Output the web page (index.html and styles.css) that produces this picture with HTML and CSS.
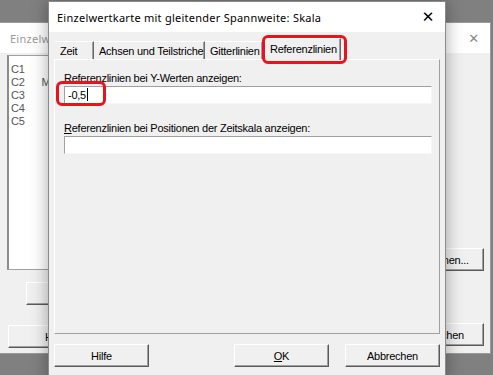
FILE: index.html
```html
<!DOCTYPE html>
<html lang="de">
<head>
    <meta charset="UTF-8">
    <title>Einzelwertkarte mit gleitender Spannweite: Skala</title>
    <link rel="stylesheet" href="styles.css">
</head>
<body>
    <div class="desktop">

        <!-- main dialog behind -->
        <div class="win back">
            <div class="titlebar">
                <span class="title">Einzelwertkarte mit gleitender Spannweite</span>
                <span class="close">&#x2715;</span>
            </div>
            <div class="back-body">
                <div class="listbox">
                    <div class="item">C1</div>
                    <div class="item">C2 <span class="col2">M</span></div>
                    <div class="item">C3</div>
                    <div class="item">C4</div>
                    <div class="item">C5</div>
                </div>
                <button class="btn b-select">Auswählen</button>
                <button class="btn b-help">Hilfe</button>
                <button class="btn b-opts">Daten<u>o</u>ptionen...</button>
                <button class="btn b-cancel">Abbrechen</button>
            </div>
        </div>

        <!-- scale sub-dialog in front -->
        <div class="win front">
            <div class="titlebar">
                <span class="title">Einzelwertkarte mit gleitender Spannweite: Skala</span>
                <span class="close">&#x2715;</span>
            </div>
            <div class="body">
                <div class="tabs">
                    <div class="tab tab-time">Zeit</div>
                    <div class="tab tab-axes">Achsen und Teilstriche</div>
                    <div class="tab tab-grid">Gitterlinien</div>
                    <div class="tab tab-ref active">Referenzlinien</div>
                </div>
                <div class="panel">
                    <div class="field">
                        <label>Referenzlinien bei Y-Werten anzeigen:</label>
                        <div class="input">-0,5<span class="caret"></span></div>
                    </div>
                    <div class="field">
                        <label><u>R</u>eferenzlinien bei Positionen der Zeitskala anzeigen:</label>
                        <div class="input"></div>
                    </div>
                </div>
                <div class="buttons">
                    <button class="btn">Hilfe</button>
                    <div class="right">
                        <button class="btn"><u>O</u>K</button>
                        <button class="btn">Abbrechen</button>
                    </div>
                </div>
            </div>

            <!-- red annotation marks -->
            <div class="mark mark-tab"></div>
            <div class="mark mark-input"></div>
        </div>
    </div>
</body>
</html>
```

FILE: styles.css
```css
*{
    margin: 0; padding: 0;
    box-sizing: border-box;
}
body{
    width: 493px;
    height: 375px;
    overflow: hidden;
    font-family: "Liberation Sans", Arial, sans-serif;
    font-size: 11px;
    letter-spacing: -0.25px;
    color: #000;
}
.desktop{
    position: relative;
    width: 493px;
    height: 375px;
    background: #808080;
    overflow: hidden;
}
.win{
    position: absolute;
    background: #f0f0f0;
    border: 1px solid #9a9a9a;
}
.titlebar{
    display: flex;
    align-items: center;
    justify-content: space-between;
    height: 30px;
    background: #fff;
    padding: 0 10px 0 8px;
}
.titlebar .title{
    font-family: "Noto Sans", sans-serif;
    font-size: 11px;
    letter-spacing: 0.25px;
    white-space: nowrap;
}
.titlebar .close{
    font-family: "DejaVu Sans", sans-serif;
    font-size: 14px;
    line-height: 1;
}

/* back window */
.back{
    left: -2px;
    top: 22px;
    width: 493px;
    height: 332px;
}
.back .titlebar{
    padding-left: 11px;
}
.back .title{
    color: #9a9a9a;
}
.back .close{
    color: #8a8a8a;
    font-size: 13px;
    margin-right: 1px;
}
.back-body{
    position: relative;
    height: 300px;
}
.listbox{
    position: absolute;
    left: 8px;
    top: 2px;
    width: 70px;
    height: 215px;
    background: #fff;
    border: 1px solid #a0a0a0;
    border-left: 2px solid #8c8c8c;
    padding: 7px 2px;
    color: #555;
}
.listbox .item{
    line-height: 13px;
}
.listbox .col2{
    margin-left: 14px;
}
.btn{
    font-family: "Liberation Sans", Arial, sans-serif;
    font-size: 11px;
    letter-spacing: -0.25px;
    color: #000;
    background: #f0f0f0;
    border: 1px solid;
    border-color: #fff #5a5a5a #5a5a5a #fff;
    box-shadow: inset -1px -1px #a0a0a0;
    height: 23px;
}
.back .btn{
    position: absolute;
}
.b-select{ left: 27px; top: 229px; width: 120px; }
.b-help{ left: 9px; top: 272px; width: 95px; }
.b-opts{ left: 378px; top: 195px; width: 107px; }
.b-cancel{ left: 394px; top: 270px; width: 91px; }

/* front dialog */
.front{
    left: 48px;
    top: 1px;
    width: 398px;
    height: 385px;
    border-color: #8a8a8a;
    box-shadow: 0 0 16px rgba(0,0,0,.35);
}
.front .close{
    font-size: 15px;
    margin-right: 1px;
}
.body{
    padding: 6px 5px 0 5px;
}
.tabs{
    display: flex;
    align-items: flex-end;
    height: 21px;
    padding-left: 1px;
    position: relative;
    z-index: 1;
}
.tab{
    height: 18px;
    padding: 2px 0 0 5px;
    border-top: 1px solid #fff;
    border-right: 1px solid #6a6a6a;
    box-shadow: inset -1px 0 #a0a0a0;
    white-space: nowrap;
    overflow: hidden;
    line-height: 14px;
}
.tab-time{ width: 39px; }
.tab-axes{ width: 111px; }
.tab-grid{ width: 58px; }
.tab-ref{ width: 78px; }
.tab.active{
    height: 22px;
    margin-bottom: -1px;
    padding: 3px 0 0 6px;
    border-left: 1px solid #fff;
    background: #f0f0f0;
}
.panel{
    height: 275px;
    border: 1px solid;
    border-color: #fff #a0a0a0 #a0a0a0 #fff;
    padding: 12px 7px 0 9px;
}
.field{
    margin-bottom: 18px;
}
.field label{
    display: block;
    line-height: 13px;
    margin-bottom: 1px;
    white-space: nowrap;
}
.input{
    height: 18px;
    background: #fff;
    border: 1px solid;
    border-color: #a0a0a0 #f6f6f6 #f6f6f6 #a0a0a0;
    padding: 1px 3px;
    line-height: 14px;
}
.caret{
    display: inline-block;
    width: 1px;
    height: 13px;
    background: #000;
    vertical-align: -2px;
    margin-left: 1px;
}
.buttons{
    display: flex;
    justify-content: space-between;
    margin-top: 10px;
}
.buttons .btn{
    width: 95px;
}
.buttons .right{
    display: flex;
    gap: 16px;
}
.mark{
    position: absolute;
    border: 3px solid #e8141c;
    border-radius: 6px;
    z-index: 2;
}
.mark-tab{
    left: 213px;
    top: 33px;
    width: 85px;
    height: 29px;
}
.mark-input{
    left: 7px;
    top: 79px;
    width: 50px;
    height: 25px;
}
```
